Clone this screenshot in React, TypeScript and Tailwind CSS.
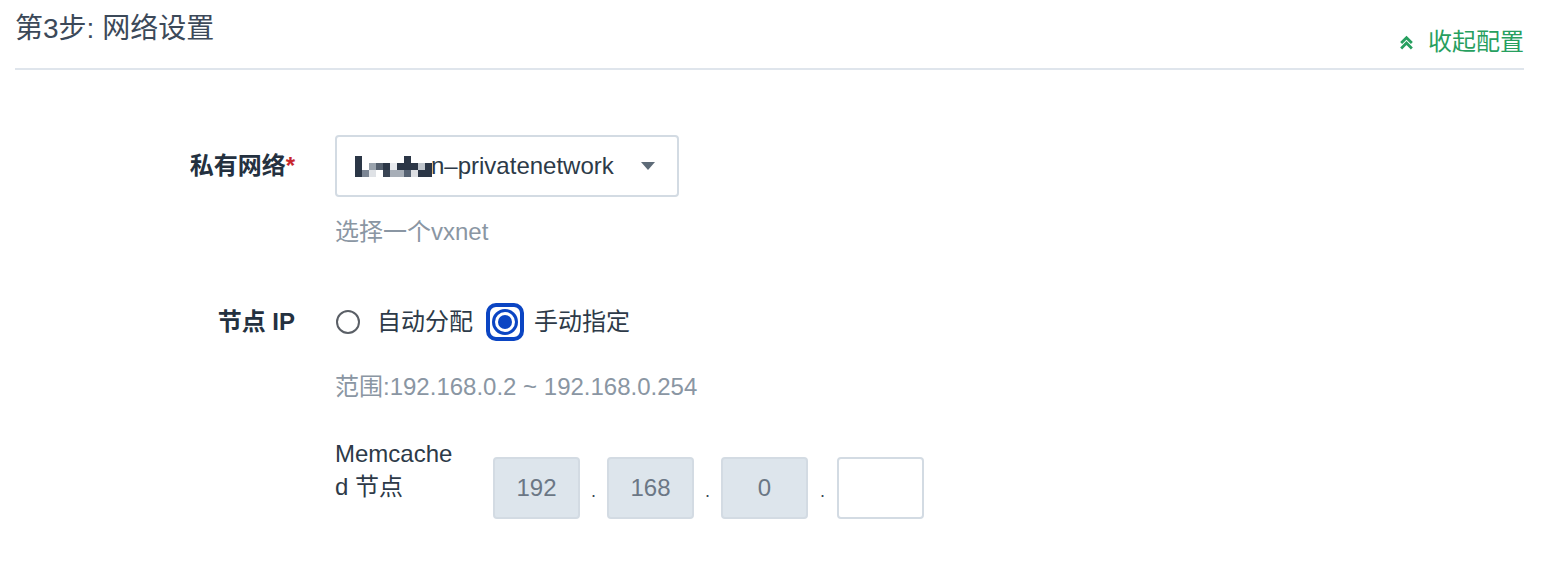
import React from 'react'

const FONT = "font-['Liberation_Sans','Noto_Sans_CJK_SC',sans-serif]"

// mosaic blocks over the redacted network name (3 rows x 11 cols, 7px cells)
const mosaic: (string | null)[][] = [
  ['#2b3646', null, null, null, null, null, null, '#2b3646', null, null, null],
  ['#2b3646', null, '#9aa3ad', '#55606e', '#2b3646', '#e8eaee', '#2b3646', '#2b3646', '#2b3646', '#bfc5cc', '#2b3646'],
  ['#2b3646', '#7b8593', '#dfe2e6', null, '#3a4555', '#a7aeb7', '#a7aeb7', '#566272', '#dddfe3', '#2b3646', '#2b3646'],
]

function Mosaic() {
  return (
    <svg width="77" height="21" viewBox="0 0 77 21" className="shrink-0">
      {mosaic.map((row, r) =>
        row.map((c, i) => (c ? <rect key={`${r}-${i}`} x={i * 7} y={r * 7} width="7" height="7" fill={c} /> : null))
      )}
    </svg>
  )
}

function IpBox({ value }: { value?: string }) {
  return (
    <div
      className={`w-[87px] h-[62px] rounded-[4px] border-2 flex items-center justify-center text-[24px] text-[#6b7785] ${
        value ? 'bg-[#dde5ec] border-[#d3dbe3]' : 'bg-white border-[#d3dbe3]'
      }`}
    >
      {value}
    </div>
  )
}

function Dot({ w = 'w-[27px]' }: { w?: string }) {
  return <div className={`${w} h-[62px] flex items-center justify-center text-[18px] text-[#3a4756] pt-[6px]`}>.</div>
}

export default function App() {
  return (
    <div className={`w-[1544px] h-[578px] bg-white pl-[15px] pr-[20px] ${FONT}`}>
      {/* header */}
      <div className="h-[70px] border-b-2 border-[#dfe5ec] flex justify-between items-start">
        <div className="pt-[10px] text-[28px] leading-[38px] text-[#3c4959]">第3步: 网络设置</div>
        <button className="pt-[23px] flex items-center gap-[14px] text-[24px] leading-[38px] text-[#279f5f]">
          <svg width="15" height="15" viewBox="0 0 14 14" fill="none" stroke="#279f5f" strokeWidth="2.6">
            <path d="M2 7.5 L7 2.5 L12 7.5" />
            <path d="M2 12.5 L7 7.5 L12 12.5" />
          </svg>
          收起配置
        </button>
      </div>

      {/* form */}
      <div className="grid grid-cols-[280px_1fr] gap-x-[40px] mt-[65px]">
        {/* 私有网络 */}
        <div className="h-[62px] flex items-center justify-end text-[24px] font-bold text-[#243140]">
          私有网络<span className="text-[#c8272d]">*</span>
        </div>
        <div>
          <div className="w-[344px] h-[62px] rounded-[4px] border-2 border-[#d3dbe3] flex items-center pl-[18px] pr-[22px]">
            <Mosaic />
            <span className="text-[24px] text-[#2d3a48] -ml-px">n–privatenetwork</span>
            <svg width="14" height="8" viewBox="0 0 14 8" className="ml-auto">
              <path d="M0 0 H14 L7 8 Z" fill="#5e6b78" />
            </svg>
          </div>
          <div className="mt-[19px] text-[24px] leading-[32px] text-[#8a96a3]">选择一个vxnet</div>
        </div>

        {/* 节点 IP */}
        <div className="mt-[55px] h-[38px] flex items-center justify-end text-[24px] font-bold text-[#243140]">节点 IP</div>
        <div className="mt-[55px]">
          <div className="h-[38px] flex items-center text-[24px] text-[#2d3a48]">
            <div className="w-[24px] h-[24px] rounded-full border-2 border-[#5a5f66] ml-px" />
            <span className="ml-[17px]">自动分配</span>
            <div className="ml-[13px] w-[38px] h-[38px] rounded-[10px] border-[4px] border-[#0b45c3] flex items-center justify-center">
              <div className="w-[26px] h-[26px] rounded-full border-[3px] border-[#0b45c3] flex items-center justify-center">
                <div className="w-[14px] h-[14px] rounded-full bg-[#0b45c3]" />
              </div>
            </div>
            <span className="ml-[10px]">手动指定</span>
          </div>
          <div className="mt-[30px] text-[24px] leading-[32px] text-[#8a96a3]">范围:192.168.0.2 ~ 192.168.0.254</div>

          <div className="mt-[34px] flex items-start">
            <div className="w-[122px] break-all text-[24px] leading-[33px] text-[#2d3a48]">Memcached 节点</div>
            <div className="ml-[36px] mt-[20px] flex items-center">
              <IpBox value="192" />
              <Dot />
              <IpBox value="168" />
              <Dot />
              <IpBox value="0" />
              <Dot w="w-[29px]" />
              <IpBox />
            </div>
          </div>
        </div>
      </div>
    </div>
  )
}
